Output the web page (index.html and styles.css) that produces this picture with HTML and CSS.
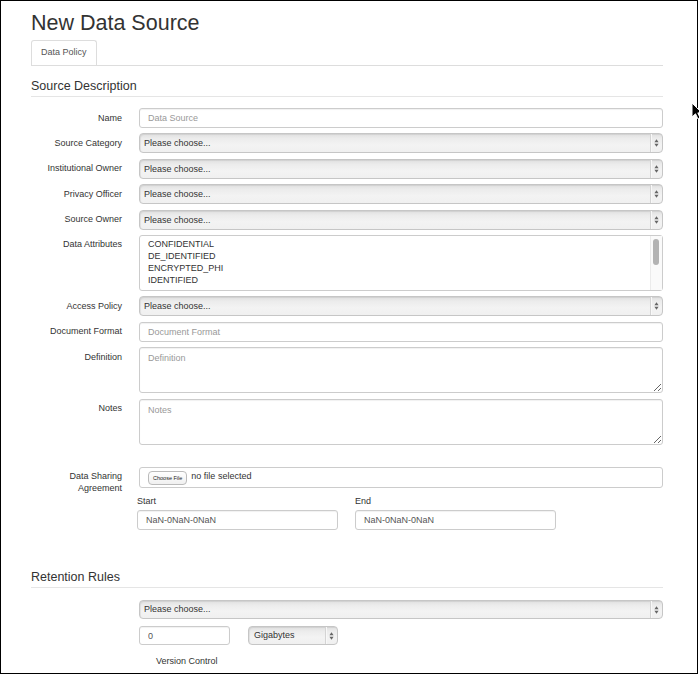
FILE: index.html
```html
<!DOCTYPE html>
<html>
<head>
<meta charset="utf-8">
<title>New Data Source</title>
<link rel="stylesheet" href="styles.css">
</head>
<body>
<div class="frame">
  <div class="page">
    <h1 class="title">New Data Source</h1>
    <div class="tabs"><span class="tab">Data Policy</span></div>

    <h2 class="section">Source Description</h2>
    <div class="form">
      <div class="row"><label class="lbl">Name</label><input class="inp" placeholder="Data Source"></div>
      <div class="row"><label class="lbl">Source Category</label>
        <div class="sel"><span class="sel-text">Please choose...</span><span class="sel-arrow"><svg width="5" height="8" viewBox="0 0 5 8"><path d="M2.5 0.3L4.6 3.2H0.4Z M0.4 4.8H4.6L2.5 7.7Z" fill="#666"/></svg></span></div></div>
      <div class="row"><label class="lbl">Institutional Owner</label>
        <div class="sel"><span class="sel-text">Please choose...</span><span class="sel-arrow"><svg width="5" height="8" viewBox="0 0 5 8"><path d="M2.5 0.3L4.6 3.2H0.4Z M0.4 4.8H4.6L2.5 7.7Z" fill="#666"/></svg></span></div></div>
      <div class="row"><label class="lbl">Privacy Officer</label>
        <div class="sel"><span class="sel-text">Please choose...</span><span class="sel-arrow"><svg width="5" height="8" viewBox="0 0 5 8"><path d="M2.5 0.3L4.6 3.2H0.4Z M0.4 4.8H4.6L2.5 7.7Z" fill="#666"/></svg></span></div></div>
      <div class="row"><label class="lbl">Source Owner</label>
        <div class="sel"><span class="sel-text">Please choose...</span><span class="sel-arrow"><svg width="5" height="8" viewBox="0 0 5 8"><path d="M2.5 0.3L4.6 3.2H0.4Z M0.4 4.8H4.6L2.5 7.7Z" fill="#666"/></svg></span></div></div>
      <div class="row"><label class="lbl">Data Attributes</label>
        <div class="listbox">
          <div class="opts">
            <div>CONFIDENTIAL</div>
            <div>DE_IDENTIFIED</div>
            <div>ENCRYPTED_PHI</div>
            <div>IDENTIFIED</div>
          </div>
          <div class="sbar"><div class="thumb"></div></div>
        </div></div>
      <div class="row"><label class="lbl">Access Policy</label>
        <div class="sel"><span class="sel-text">Please choose...</span><span class="sel-arrow"><svg width="5" height="8" viewBox="0 0 5 8"><path d="M2.5 0.3L4.6 3.2H0.4Z M0.4 4.8H4.6L2.5 7.7Z" fill="#666"/></svg></span></div></div>
      <div class="row"><label class="lbl">Document Format</label><input class="inp" placeholder="Document Format"></div>
      <div class="row"><label class="lbl">Definition</label><textarea class="ta" placeholder="Definition"></textarea></div>
      <div class="row"><label class="lbl">Notes</label><textarea class="ta" placeholder="Notes"></textarea></div>
      <div class="row row-file"><label class="lbl">Data Sharing Agreement</label>
        <div class="filebox"><span class="filebtn">Choose File</span><span class="filetext">no file selected</span></div></div>
    </div>

    <div class="dates">
      <div class="date-col"><div class="date-lbl">Start</div><input class="inp date-inp" value="NaN-0NaN-0NaN"></div>
      <div class="date-col"><div class="date-lbl">End</div><input class="inp date-inp" value="NaN-0NaN-0NaN"></div>
    </div>

    <h2 class="section sec2">Retention Rules</h2>
    <div class="ret">
      <div class="sel sel-full"><span class="sel-text">Please choose...</span><span class="sel-arrow"><svg width="5" height="8" viewBox="0 0 5 8"><path d="M2.5 0.3L4.6 3.2H0.4Z M0.4 4.8H4.6L2.5 7.7Z" fill="#666"/></svg></span></div>
    </div>
    <div class="sizes">
      <input class="inp size-inp" value="0">
      <div class="sel size-sel"><span class="sel-text">Gigabytes</span><span class="sel-arrow"><svg width="5" height="8" viewBox="0 0 5 8"><path d="M2.5 0.3L4.6 3.2H0.4Z M0.4 4.8H4.6L2.5 7.7Z" fill="#666"/></svg></span></div>
    </div>
    <div class="vc">Version Control</div>
  </div>
</div>
<svg class="cursor" width="12" height="18" viewBox="0 0 12 18"><path d="M1 1L1 15L4.5 11.8L7 17L9.2 16L6.8 10.9L11 10.9Z" fill="#000" stroke="#fff" stroke-width="1"/></svg>
</body>
</html>
```

FILE: styles.css
```css
body {
  margin: 0;
  font-family: "Liberation Sans", Arial, sans-serif;
  color: #333;
  background: #fff;
}

.frame {
  width: 698px;
  height: 674px;
  box-sizing: border-box;
  border: 1px solid #000;
  overflow: hidden;
}

.page {
  width: 632px;
  margin-left: 30px;
}

.title {
  margin: 10px 0 0;
  font-size: 21.5px;
  line-height: 24px;
  font-weight: normal;
  color: #333;
}

.tabs {
  margin-top: 5px;
  display: flex;
  border-bottom: 1px solid #ddd;
}

.tab {
  font-size: 9px;
  line-height: 23px;
  padding: 0 9px 1px;
  border: 1px solid #ddd;
  border-bottom: 0;
  border-radius: 3px 3px 0 0;
  color: #555;
}

.section {
  margin: 0;
  padding: 13px 0 2px;
  font-size: 12.5px;
  line-height: 15px;
  font-weight: normal;
  color: #333;
  border-bottom: 1px solid #e5e5e5;
}

.sec2 {
  margin-top: 27px;
}

.form {
  margin-top: 11px;
  display: flex;
  flex-direction: column;
  gap: 5.4px;
}

.row {
  display: flex;
  align-items: flex-start;
  gap: 17px;
}

.row-file {
  margin-top: 17px;
}

.lbl {
  width: 91px;
  flex: none;
  text-align: right;
  font-size: 9px;
  line-height: 12px;
  padding-top: 3.5px;
  color: #333;
}

.inp {
  flex: 1;
  min-width: 0;
  height: 20px;
  box-sizing: border-box;
  margin: 0;
  padding: 0 8px;
  border: 1px solid #ccc;
  border-radius: 3px;
  font: 9px "Liberation Sans", Arial, sans-serif;
  color: #555;
  background: #fff;
  box-shadow: inset 0 1px 1px rgba(0, 0, 0, 0.06);
  outline: none;
}

.inp::placeholder,
.ta::placeholder {
  color: #999;
}

.sel {
  flex: 1;
  height: 20px;
  box-sizing: border-box;
  display: flex;
  align-items: stretch;
  border: 1px solid #c6c6c6;
  border-radius: 4px;
  background: linear-gradient(to bottom, #e0e0e0 0%, #ececec 25%, #f3f3f3 60%, #f0f0f0 100%);
  box-shadow: inset 1px 1px 1px rgba(0, 0, 0, 0.07);
}

.sel-text {
  flex: 1;
  font-size: 9px;
  line-height: 18px;
  padding-left: 4px;
  color: #333;
}

.sel-arrow {
  width: 11px;
  flex: none;
  display: flex;
  align-items: center;
  justify-content: center;
  border-left: 1px solid #d4d4d4;
  box-shadow: inset 1px 0 0 #f8f8f8;
}

.listbox {
  flex: 1;
  height: 56px;
  box-sizing: border-box;
  display: flex;
  border: 1px solid #ccc;
  border-radius: 3px;
  background: #fff;
}

.opts {
  flex: 1;
  padding: 2px 8px;
  font-size: 9px;
  line-height: 12px;
  color: #333;
}

.sbar {
  width: 11px;
  flex: none;
  border-left: 1px solid #ebebeb;
  background: #fafafa;
}

.thumb {
  width: 6px;
  height: 26px;
  margin: 3px 0 0 2px;
  border-radius: 3px;
  background: #b3b3b3;
}

.ta {
  flex: 1;
  height: 46px;
  box-sizing: border-box;
  margin: 0;
  padding: 4px 8px;
  border: 1px solid #ccc;
  border-radius: 3px;
  font: 9px/12px "Liberation Sans", Arial, sans-serif;
  color: #555;
  resize: vertical;
  box-shadow: inset 0 1px 1px rgba(0, 0, 0, 0.06);
  outline: none;
}

.filebox {
  flex: 1;
  height: 21px;
  box-sizing: border-box;
  display: flex;
  align-items: flex-start;
  gap: 4px;
  padding: 2px 8px 0;
  border: 1px solid #ccc;
  border-radius: 3px;
}

.filebtn {
  font-size: 5.5px;
  line-height: 12px;
  height: 14px;
  box-sizing: border-box;
  padding: 0 4px;
  margin-top: 1px;
  border: 1px solid #bbb;
  border-radius: 4px;
  background: linear-gradient(#fff, #f0f0f0);
  color: #222;
}

.filetext {
  font-size: 9px;
  line-height: 12px;
  color: #333;
}

.dates {
  display: flex;
  gap: 17px;
  margin: 1px 0 0 106px;
}

.date-col {
  width: 201px;
}

.date-lbl {
  font-size: 9px;
  line-height: 12px;
  margin-bottom: 2px;
  color: #333;
}

.date-inp {
  width: 100%;
  padding-left: 8px;
}

.ret {
  margin: 12px 0 0 108px;
  display: flex;
}

.sel-full {
  height: 19px;
}

.sizes {
  display: flex;
  gap: 18px;
  margin: 7px 0 0 108px;
}

.size-inp {
  flex: none;
  width: 91px;
  height: 19px;
}

.size-sel {
  flex: none;
  width: 90px;
  height: 19px;
}

.size-sel .sel-text {
  line-height: 17px;
  padding-left: 5px;
}

.sel-full .sel-text {
  line-height: 17px;
}

.vc {
  margin: 10px 0 0 125px;
  font-size: 9px;
  line-height: 12px;
  color: #333;
}

.cursor {
  position: absolute;
  left: 691px;
  top: 102px;
}
```
